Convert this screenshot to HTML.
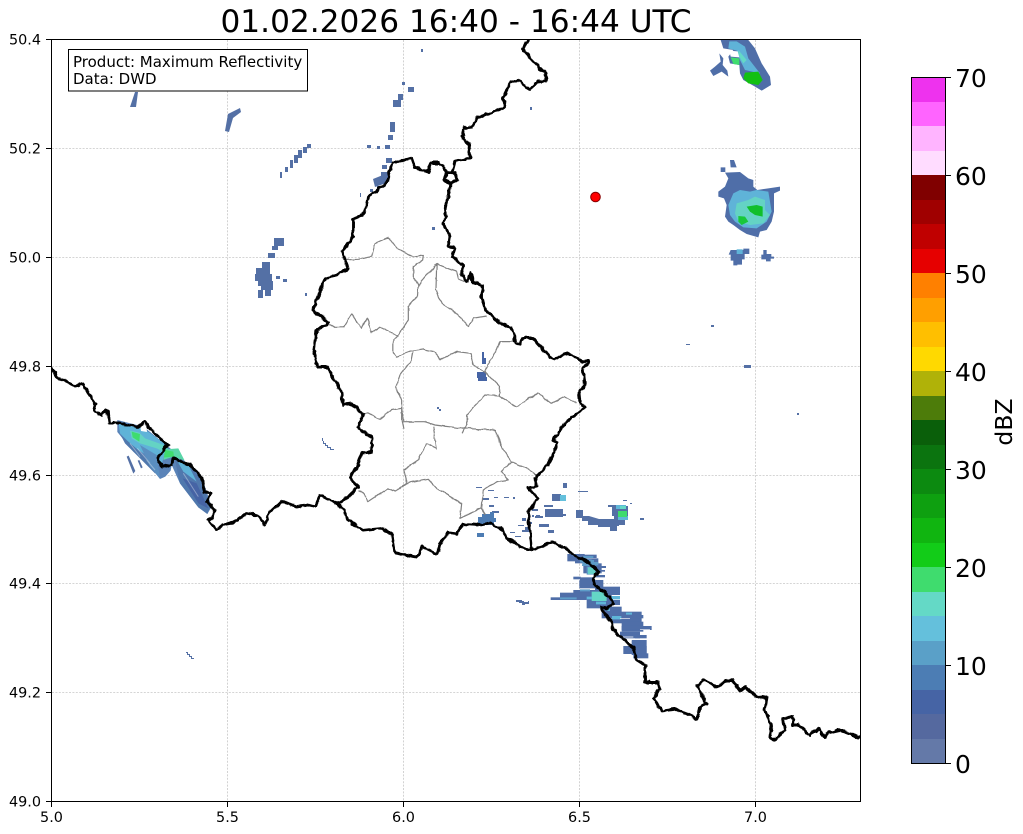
<!DOCTYPE html>
<html><head><meta charset="utf-8">
<style>
html,body{margin:0;padding:0;background:#fff;width:1023px;height:834px;overflow:hidden}
svg{display:block}
text{font-family:"DejaVu Sans","Liberation Sans",sans-serif;fill:#000}
.tk{font-size:14.4px}
.cb{font-size:25px}
</style></head><body>
<svg width="1023" height="834" viewBox="0 0 1023 834" xmlns="http://www.w3.org/2000/svg">
<defs>
<filter id="w" filterUnits="userSpaceOnUse" x="0" y="0" width="1023" height="834">
<feTurbulence type="fractalNoise" baseFrequency="0.16" numOctaves="2" seed="4" result="n"/>
<feDisplacementMap in="SourceGraphic" in2="n" scale="4" xChannelSelector="R" yChannelSelector="G"/>
</filter>
<filter id="g" filterUnits="userSpaceOnUse" x="0" y="0" width="1023" height="834">
<feTurbulence type="fractalNoise" baseFrequency="0.12" numOctaves="2" seed="9" result="n"/>
<feDisplacementMap in="SourceGraphic" in2="n" scale="3" xChannelSelector="G" yChannelSelector="R"/>
</filter>
<clipPath id="ax"><rect x="51.5" y="39.5" width="809" height="762"/></clipPath>
</defs>
<rect width="1023" height="834" fill="#fff"/>
<!-- grid -->
<g stroke="#c8c8c8" stroke-width="0.8" stroke-dasharray="2 1.4" fill="none">
<path d="M227.5 40V801M403.5 40V801M579.5 40V801M755.5 40V801"/>
<path d="M52 148.5H860M52 257.5H860M52 366.5H860M52 475.5H860M52 583.5H860M52 692.5H860"/>
</g>
<!-- radar -->
<g clip-path="url(#ax)">
<g fill="#5470a5">
<path d="M130 107L136 107L138 92L135 92ZM225 131L229 132L233 118L241 112L240 108L228 114Z"/>
<path d="M280 178h2v-6h-2zM285 172h3v-5h-3zM290 168h3v-8h-3zM294 163h4v-8h-4zM298 158h4v-8h-4zM303 153h4v-6h-4zM307 148h4v-4h-4z"/>
<path d="M367 145h4v3h-4zM377 146h3v3h-3zM385 145h5v4h-5zM388 135h5v5h-5zM390 122h5v10h-5zM393 100h8v7h-8zM398 94h5v6h-5zM402 82h3v3h-3zM408 87h6v5h-6zM421 49h2v3h-2zM386 158h6v5h-6zM382 165h5v4h-5zM381 172h8v6h-8z"/>
<path d="M373 179L388 173L386 183L375 187Z"/>
<path d="M370 189h3v3h-3zM377 186h2v4h-2zM360 193h1v4h-1zM432 227h3v3h-3zM305 293h2v3h-2z"/>
<path d="M274 238h10v8h-10zM272 246h6v4h-6zM268 253h7v5h-7zM262 262h8v6h-8zM256 268h14v6h-14zM255 274h17v7h-17zM258 281h15v5h-15zM261 286h12v4h-12zM258 290h5v8h-5zM265 290h6v6h-6zM276 276h4v3h-4zM283 279h4v3h-4z"/>
<path d="M482 352h2v6h2v6h-4zM477 372h9v5h1v4h-9v-3h-1z" fill="#4664a5"/>
<path d="M437 407h2v2h2v2h-2v-2h-2zM686 344h4v1h-4zM711 325h3v2h-3zM744 365h7v3h-7zM797 413h2v2h-2zM530 107h2v3h-2z"/>
<path d="M322 438h1v3h1v2h2v2h2v2h3v2h3v1h-4v-2h-3v-2h-2v-2h-2v-3h-1z"/>
<path d="M186 652h2v2h2v2h2v2h2v1h-3v-2h-2v-2h-2v-2h-1zM516 600h6v1h2v1h4v-1h1v3h-4v1h-3v-2h-3v-1h-3z"/>
<path d="M476 487h6v1h-6zM488 490h6v1h-6zM483 498h6v2h-6zM489 505h5v2h-5zM492 511h7v2h-7zM494 497h4v1h-4zM504 497h5v1h-5zM513 497h2v2h-2zM522 518h4v3h-4zM532 509h6v2h-6zM544 505h9v2h-9zM536 515h4v2h-4zM532 515h2v2h-2zM530 522h2v2h-2zM518 525h6v1h-6zM525 527h4v4h-4zM510 532h5v1h-5zM515 536h6v1h-6zM522 530h8v2h-8z"/>
<path d="M535 516h8v2h-8zM539 524h10v3h-10zM545 509h18v8h-18zM546 514h20v2h-20zM552 494h9v7h-9zM562 498h3v2h-3zM563 483h4v5h-4zM578 491h10v1h-10zM548 530h6v3h-6z"/>
<path d="M576 510h7v6h6l10 3h16v-14h-2l8 1v14h-2v6h-2v5h-7v-4h-12v-2h-10v-4h-6v-3h-6z"/>
<path d="M640 518h4v2h-4zM608 505h8v2h-8zM623 500h4v1h-4zM630 503h2v1h-2z"/>
<path d="M478 517h4v-3h8v-2h4v6h2v4h-2v3h-14v-2h-2zM477 533h7v4h-7z" fill="#4d7cb3"/>
</g>
<!-- SE band -->
<g transform="translate(540 540) scale(.3333)">
<g fill="#4f6ea8">
<rect x="82" y="42" width="52" height="22"/><rect x="130" y="44" width="40" height="10"/><rect x="105" y="55" width="70" height="15"/>
<rect x="130" y="70" width="55" height="30"/><rect x="175" y="78" width="23" height="6"/><rect x="175" y="90" width="20" height="5"/>
<rect x="100" y="110" width="22" height="8"/><rect x="120" y="112" width="40" height="13"/><rect x="165" y="105" width="30" height="7"/>
<rect x="118" y="120" width="72" height="25"/><rect x="165" y="140" width="75" height="25"/><rect x="100" y="150" width="65" height="10"/>
<rect x="60" y="158" width="110" height="20"/><rect x="32" y="172" width="108" height="8"/><rect x="140" y="165" width="75" height="40"/>
<rect x="215" y="180" width="25" height="15"/><rect x="185" y="200" width="60" height="35"/><rect x="215" y="215" width="90" height="35"/>
<rect x="290" y="225" width="20" height="10"/><rect x="245" y="245" width="65" height="30"/><rect x="245" y="258" width="90" height="12"/>
<rect x="240" y="275" width="60" height="20"/><rect x="285" y="285" width="35" height="10"/><rect x="275" y="300" width="45" height="45"/>
<rect x="250" y="318" width="70" height="24"/><rect x="280" y="340" width="45" height="15"/>
</g>
<path d="M120 58h35v8h20v10h-25v-8h-30zM140 80h26v24h-26zM60 172h50v6h-50zM120 148h30v6h-30z" fill="#5d9cc8"/>
<path d="M130 48h30v6h-20v6h22v14h-14v4h-22z" fill="#5d9cc8"/>
<path d="M144 82h22v20h-22z" fill="#64d0c6"/>
<path d="M155 155h45v28h-45z" fill="#64d6c6"/>
<path d="M140 170h16v8h-16zM168 185h30v8h-30zM200 205h10v8h-10zM216 228h28v10h-28zM258 218h18v6h-18zM212 168h28v10h-28z" fill="#5fb6d8"/>
<path d="M100 120h18v3h-18zM240 235h30v2h-30zM300 268h30v2h-30zM240 290h40v2h-40zM250 300h25v3h-25z" fill="#fff"/>
</g>
<!-- cluster near 49.5 6.6 -->
<g fill="#64c0dc"><rect x="560" y="495" width="6" height="6"/></g>
<path d="M612 506h16v14h-3v5h-13v-5h2v-4h-2z" fill="#5470a5"/>
<path d="M616 505h10v4h-10zM618 516h10v4h-10z" fill="#5fb6d8"/>
<rect x="618" y="511" width="9" height="6" fill="#3fdc6e"/>
<rect x="620" y="506" width="6" height="3" fill="#64d9c6"/>
<!-- left cluster -->
<g transform="translate(100 410) scale(.3333)">
<path d="M52 30L130 50L205 110L250 150L305 200L335 290L322 312L295 292L240 220L215 165L212 182L196 200L180 207L150 170L100 125L52 66Z" fill="#5a83b8"/>
<path d="M80 140l6-3 20 46-6 8zM113 152l5-2 10 22-5 3z" fill="#5470a5"/>
<path d="M56 42L130 55L200 105L185 165L100 110L60 70Z" fill="#5fb3d8"/>
<path d="M90 62L118 68L135 85L205 110L200 130L170 115L120 100L95 85Z" fill="#64d3c4"/>
<path d="M95 65L120 72L118 95L98 82Z" fill="#3fdc6e"/>
<path d="M195 118L235 115L254 152L220 140L190 150Z" fill="#5ad6a8"/>
<path d="M195 120L220 125L222 140L192 142Z" fill="#3fdc6e"/>
<path d="M62 75L120 125L175 185L165 190L115 140L75 100Z" fill="#5078ad"/>
<path d="M225 150L250 150L300 200L330 290L322 312L295 292L240 220Z" fill="#5078ad"/>
<path d="M230 150L265 165L290 215L250 185Z" fill="#5fb3d8"/>
<path d="M248 205L290 220L325 295L295 280Z" fill="#4664a5"/>
<path d="M120 105L170 135L180 205L150 170Z" fill="#5a8ec0"/>
<path d="M90 100L120 140M112 115L150 160M140 150L165 180M250 190L295 260" stroke="#fff" stroke-opacity=".35" stroke-width="3" fill="none"/>
</g>
<path d="M140 424L146 423L147 432L141 431Z" fill="#fff"/>
<!-- top-right cluster -->
<g transform="translate(690 30) scale(.3333)">
<path d="M92 30H175L195 55L215 100L240 140L243 165L215 182L195 170L160 150L150 130L148 105L120 100L115 80L130 60L100 55Z" fill="#4f6ea8"/>
<path d="M88 70L100 85L98 105L112 122L115 140L95 125L70 138L60 122L75 110L92 95Z" fill="#4f6ea8"/>
<path d="M118 34H140L165 50L175 85L210 130L165 120L150 90L140 62L115 55Z" fill="#5fb3d8"/>
<path d="M145 60L170 90L160 100L145 75Z" fill="#64d9c6"/>
<path d="M118 62L143 64L148 82L122 80Z" fill="#fff"/>
<path d="M122 82L148 85L148 105L130 102Z" fill="#3fdc6e"/>
<path d="M165 128L205 125L218 150L205 165L175 160L160 145Z" fill="#12c012"/>
</g>
<!-- right cluster -->
<g transform="translate(700 150) scale(.3333)">
<path d="M90 30h12l8 22h-18zM62 52h14v14h-14z" fill="#4f6ea8"/>
<path d="M75 68L120 66L145 85L160 90L160 110L172 120L205 115L240 110L240 122L222 130L222 185L215 215L200 240L180 245L175 262L140 252L120 240L100 225L85 215L75 200L80 165L72 145L55 140L55 125L75 110L85 85Z" fill="#4f6ea8"/>
<path d="M100 130L120 120L150 125L170 120L205 125L215 185L200 215L170 235L130 232L105 215L90 195L85 165Z" fill="#5fb3d8"/>
<path d="M110 160L145 150L165 140L195 150L195 180L210 195L190 220L150 225L115 215L105 190Z" fill="#64d3c4"/>
<path d="M140 170L170 165L188 170L188 200L165 195L150 185Z" fill="#10bf2a"/>
<path d="M115 198L135 200L145 215L125 225L115 215Z" fill="#18c83a"/>
<path d="M92 300h38v-4h18v16h-14v16h-8v16h-14v2h-12v-14h-8v-18h-6z" fill="#4f6ea8"/>
<path d="M110 298h18v14h-18z" fill="#5fb3d8"/>
<path d="M190 300h10v12h14v8h8v6h-10v8h-14v-6h-14v-14h6z" fill="#4f6ea8"/>
</g>
</g>
<!-- gray lines -->
<g fill="none" stroke="#808080" stroke-linejoin="round" filter="url(#g)">
<g transform="translate(300 140) scale(.3333)" stroke-width="3.6">
<path d="M130 360L175 358L215 350L225 310L265 292L290 325L340 350L370 345L368 360L340 380L340 410L355 435L352 470L325 500L325 540L295 585L280 600L280 640L290 650L330 635L370 628L400 635L420 658L470 635L510 640L520 675L555 695L590 630L600 605L640 605"/>
<path d="M85 550L105 562L130 562L155 522L185 565L200 535L215 578L240 560L270 575L295 590"/>
<path d="M355 435L385 400L410 372L470 395L475 415L495 425"/>
<path d="M410 372L408 450L425 490L470 520L505 560L520 535L560 528"/>
<path d="M340 635L335 660L300 705L288 740L305 780L305 840L310 867"/>
<path d="M555 695L600 740L598 768L555 765L520 800L500 825L500 855L488 880"/>
<path d="M598 768L650 800L715 760L755 790L795 770L830 790"/>
<path d="M190 825L205 820L240 838L275 810L305 805"/>
</g>
<g transform="translate(300 400) scale(.3333)" stroke-width="3.6">
<path d="M305 20L310 65L375 65L405 75L485 85L585 90L610 150L635 185L680 205L710 225"/>
<path d="M635 185L605 215L625 240L590 245L550 270L545 325L480 355L485 310L410 265L385 238L320 250L310 210L355 180L380 130L410 145L400 80"/>
<path d="M320 250L285 275L265 265L205 305L190 280L175 272"/>
<path d="M545 325L555 345"/>
</g>
</g>
<!-- black borders -->
<g clip-path="url(#ax)">
<g fill="none" stroke="#000" stroke-width="2.9" stroke-linejoin="round" stroke-linecap="round" filter="url(#w)">
<path d="M51.5 368L57 377L75 386L83 384L95 405L95 411L102 415L105 410L108 413L109 423L120 423L137 427L145 422L153 432L168 445L158 457L162 467L172 465L173 458L190 465L202 478L204 492L211 493L207 502L215 510L213 518L208 520L216 530L222 525L233 523L247 513L258 516L265 525L269 513L282 501L297 507L308 505L315 507L320 495L337 504L347 498L358 487L350 477L357 467L362 453L371 452L372 438L358 428L363 415L353 404L343 405L342 393L327 367L317 367L314 353L317 330L327 325L328 322L313 310L325 278L337 275L348 268L342 252L353 237L353 220L365 212L368 197L387 182L392 163L412 158L415 167L428 172L431 163L440 163L447 172L444 180L451 183L457 180L455 173L447 172M451 183L448 197L445 210L447 217L443 223L450 237L448 247L455 248L452 257L463 265L462 275L467 282L471 273L473 282L482 285L482 297L485 310L500 323L512 328L516 343L520 345L523 338L532 338L550 357L555 359L567 353L583 362L588 360L589 363L583 367L585 385L579 393L580 403L585 407L580 411L565 423L553 440L558 443L548 465L535 478L537 486L528 488L538 498L528 512L532 550"/>
<path d="M528 38L523 49L532 60L545 73L546 81L537 82L530 90L518 80L511 82L503 98L505 107L493 112L477 118L472 127L464 128L462 136L469 145L470 158L455 161L452 172"/>
<path d="M337 504L345 510L347 520L363 530L382 528L392 535L395 553L400 554L417 557L423 547L437 554L440 545L448 533L457 534L463 524L480 525L490 523L500 528L507 538L520 547L532 550L540 547L552 542L565 548L577 557L590 563L598 572L593 578L595 585L610 597L613 603L608 608L602 607L605 615L612 622L613 630L633 648L637 660L645 665L645 682L657 682L660 689L653 698L662 711L677 709L697 719L700 708L706 703L697 685L705 680L717 687L725 681L732 680L740 691L745 687L758 698L767 697L765 710L772 727L770 737L775 740L785 730L783 718L793 717L792 725L798 725L810 735L812 732L820 729L825 738L827 733L840 730L853 735L858 738L864 735"/>
</g>
</g>
<!-- axes -->
<rect x="51.5" y="39.5" width="809" height="762" fill="none" stroke="#000" stroke-width="1"/>
<g stroke="#000" stroke-width="1">
<path d="M51.5 802v5M227.5 802v5M403.5 802v5M579.5 802v5M755.5 802v5"/>
<path d="M51 39.5h-5M51 148.5h-5M51 257.5h-5M51 366.5h-5M51 475.5h-5M51 583.5h-5M51 692.5h-5M51 801.5h-5"/>
</g>
<g class="tk" text-anchor="end">
<text x="41" y="44.5">50.4</text><text x="41" y="153.5">50.2</text><text x="41" y="262.5">50.0</text><text x="41" y="371.5">49.8</text><text x="41" y="480.5">49.6</text><text x="41" y="588.5">49.4</text><text x="41" y="697.5">49.2</text><text x="41" y="806.5">49.0</text>
</g>
<g class="tk" text-anchor="middle">
<text x="51.5" y="822">5.0</text><text x="227.5" y="822">5.5</text><text x="403.5" y="822">6.0</text><text x="579.5" y="822">6.5</text><text x="755.5" y="822">7.0</text>
</g>
<text x="456" y="32" text-anchor="middle" style="font-size:31.2px">01.02.2026 16:40 - 16:44 UTC</text>
<!-- legend box -->
<rect x="68.5" y="49.5" width="239" height="41.5" fill="#fff" stroke="#000" stroke-width="1"/>
<text x="73" y="67" style="font-size:15px">Product: Maximum Reflectivity</text>
<text x="73" y="84" style="font-size:15px">Data: DWD</text>
<!-- marker -->
<circle cx="595.5" cy="197" r="4.8" fill="#f00" stroke="#800" stroke-width="1"/>
<!-- colorbar -->
<g shape-rendering="crispEdges">
<rect x="912" y="77" width="33" height="25" fill="#ee32ee"/>
<rect x="912" y="102" width="33" height="24" fill="#ff64ff"/>
<rect x="912" y="126" width="33" height="25" fill="#ffb4ff"/>
<rect x="912" y="151" width="33" height="24" fill="#ffdcff"/>
<rect x="912" y="175" width="33" height="25" fill="#800000"/>
<rect x="912" y="200" width="33" height="24" fill="#a00000"/>
<rect x="912" y="224" width="33" height="25" fill="#c00000"/>
<rect x="912" y="249" width="33" height="24" fill="#e60000"/>
<rect x="912" y="273" width="33" height="25" fill="#ff8000"/>
<rect x="912" y="298" width="33" height="24" fill="#ff9f00"/>
<rect x="912" y="322" width="33" height="25" fill="#ffbf00"/>
<rect x="912" y="347" width="33" height="24" fill="#ffd900"/>
<rect x="912" y="371" width="33" height="25" fill="#b0b208"/>
<rect x="912" y="396" width="33" height="24" fill="#4d7c0a"/>
<rect x="912" y="420" width="33" height="25" fill="#0a5f0a"/>
<rect x="912" y="445" width="33" height="24" fill="#0b740f"/>
<rect x="912" y="469" width="33" height="25" fill="#0c8a10"/>
<rect x="912" y="494" width="33" height="24" fill="#0ea010"/>
<rect x="912" y="518" width="33" height="25" fill="#10b510"/>
<rect x="912" y="543" width="33" height="24" fill="#12cc18"/>
<rect x="912" y="567" width="33" height="25" fill="#3fdc6e"/>
<rect x="912" y="592" width="33" height="24" fill="#64d9c6"/>
<rect x="912" y="616" width="33" height="25" fill="#64c0dc"/>
<rect x="912" y="641" width="33" height="24" fill="#5aa0c8"/>
<rect x="912" y="665" width="33" height="25" fill="#4c7db4"/>
<rect x="912" y="690" width="33" height="24" fill="#4664a5"/>
<rect x="912" y="714" width="33" height="25" fill="#55699f"/>
<rect x="912" y="739" width="33" height="25" fill="#6479a8"/>
</g>
<rect x="911.5" y="77.5" width="34" height="686" fill="none" stroke="#000" stroke-width="1"/>
<path d="M946 77.5h5M946 175.5h5M946 273.5h5M946 371.5h5M946 469.5h5M946 567.5h5M946 665.5h5M946 763.5h5" stroke="#000" stroke-width="1"/>
<g class="cb">
<text x="955" y="87">70</text><text x="955" y="185">60</text><text x="955" y="283">50</text><text x="955" y="381">40</text><text x="955" y="479">30</text><text x="955" y="577">20</text><text x="955" y="675">10</text><text x="955" y="773">0</text>
</g>
<text transform="translate(1012 422) rotate(-90)" text-anchor="middle" style="font-size:23.5px">dBZ</text>
</svg>
</body></html>
